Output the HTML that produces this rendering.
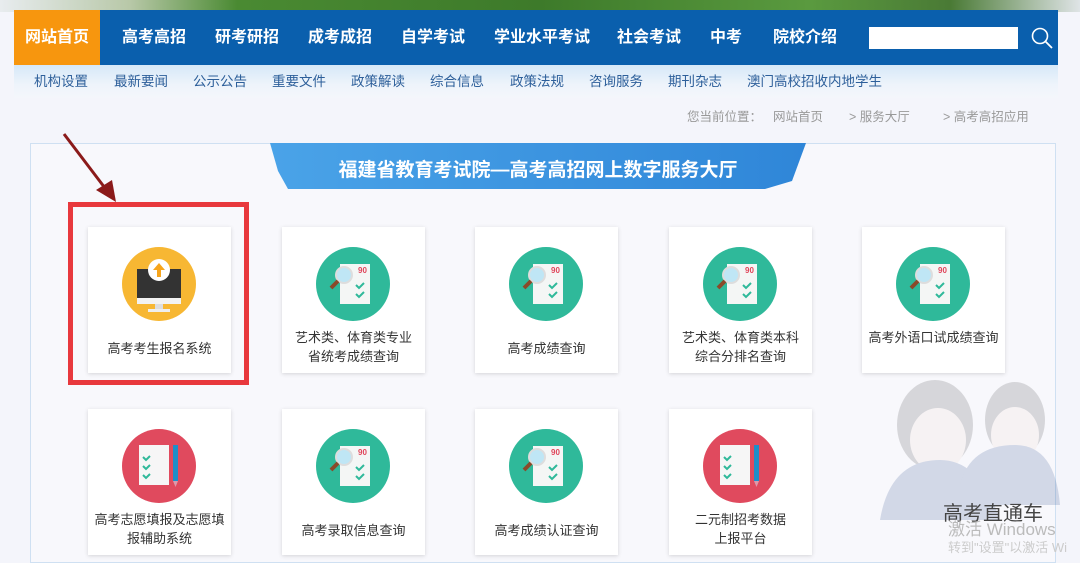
<!DOCTYPE html>
<html><head><meta charset="utf-8">
<style>
*{margin:0;padding:0;box-sizing:border-box}
body{width:1080px;height:549px;overflow:hidden;background:#f4f5fb;font-family:"Liberation Sans","Noto Sans CJK SC",sans-serif;position:relative}
.top{position:absolute;left:0;top:0;width:1080px;height:12px;background:linear-gradient(90deg,#e8ecef 0,#b8c8a8 12%,#4a8a32 22%,#3d7a2a 50%,#5a9a3f 75%,#4a7a35 88%,#dfe4e6 100%)}
.nav{position:absolute;left:14px;top:10px;width:1044px;height:55px;background:#0a5fad}
.nav span{position:absolute;top:0;line-height:55px;color:#fff;font-size:16px;font-weight:bold}
.nav .home{left:0;width:86px;height:55px;background:#f7960e;text-align:center}
.search{position:absolute;left:855px;top:17px;width:149px;height:22px;background:#fff}
.sub{position:absolute;left:14px;top:65px;width:1044px;height:33px;background:linear-gradient(#d6e8f8,#eef4fb 60%,#f4f6fb)}
.sub span{position:absolute;top:0;line-height:33px;font-size:13.5px;color:#2d5f9a}
.crumb{position:absolute;top:106px;font-size:12.5px;color:#999}
.panel{position:absolute;left:30px;top:143px;width:1026px;height:420px;border:1px solid #cfe0f2;background:#f8f8fc}
.card{position:absolute;width:143px;height:146px;background:#fff;box-shadow:0 1px 4px rgba(0,0,0,.15);text-align:center}
.card svg{position:absolute;left:34px;top:20px}
.card .t{position:absolute;left:0;width:143px;font-size:13px;color:#333;line-height:19px}
.red{position:absolute;left:68px;top:202px;width:181px;height:183px;border:5px solid #e8383d}
</style></head><body>
<div class="top"></div>
<div class="nav">
<span class="home">网站首页</span>
<span style="left:108px">高考高招</span>
<span style="left:201px">研考研招</span>
<span style="left:294px">成考成招</span>
<span style="left:387px">自学考试</span>
<span style="left:480px">学业水平考试</span>
<span style="left:603px">社会考试</span>
<span style="left:696px">中考</span>
<span style="left:759px">院校介绍</span>
<div class="search"></div>
<svg style="position:absolute;left:1016px;top:16px" width="24" height="24" viewBox="0 0 24 24"><circle cx="10" cy="10" r="7.5" fill="none" stroke="#fff" stroke-width="1.6"/><path d="M15.5 15.5L22 22" stroke="#fff" stroke-width="1.8"/></svg>
</div>
<div class="sub">
<span style="left:20px">机构设置</span><span style="left:100px">最新要闻</span><span style="left:179px">公示公告</span><span style="left:258px">重要文件</span><span style="left:337px">政策解读</span><span style="left:416px">综合信息</span><span style="left:496px">政策法规</span><span style="left:575px">咨询服务</span><span style="left:654px">期刊杂志</span><span style="left:733px">澳门高校招收内地学生</span>
</div>
<span class="crumb" style="left:687px">您当前位置：</span>
<span class="crumb" style="left:773px">网站首页</span>
<span class="crumb" style="left:849px">&gt; 服务大厅</span>
<span class="crumb" style="left:943px">&gt; 高考高招应用</span>
<div class="panel"></div>
<svg style="position:absolute;left:270px;top:143px" width="536" height="48"><defs><linearGradient id="bg" x1="0" x2="1"><stop offset="0" stop-color="#4aa3e8"/><stop offset="1" stop-color="#2f86d8"/></linearGradient></defs><polygon points="0,0 536,0 522,38 495,46 18,46 8,28" fill="url(#bg)"/><text x="268" y="33" text-anchor="middle" fill="#fff" font-size="19" font-weight="bold" font-family="Liberation Sans,Noto Sans CJK SC,sans-serif">福建省教育考试院—高考高招网上数字服务大厅</text></svg>
<svg style="position:absolute;left:60px;top:130px" width="60" height="75"><path d="M4 4L48 62" stroke="#8b1a1a" stroke-width="3"/><polygon points="56,72 36,60 52,50" fill="#8b1a1a"/></svg>
<div class="red"></div>

<svg width="0" height="0" style="position:absolute"><defs>
<g id="mag"><circle cx="37" cy="37" r="37" fill="#2fb99a"/><rect x="24" y="17" width="30" height="40" fill="#f4f6f5"/><text x="42" y="26" font-size="8" fill="#e0455a" font-weight="bold" font-family="Liberation Sans">90</text><path d="M40 38l3 3 5-5M40 47l3 3 5-5" stroke="#2fb99a" stroke-width="2" fill="none"/><circle cx="28" cy="28" r="8" fill="#bfe6f5" stroke="#ddd" stroke-width="2"/><path d="M22 34l-7 7" stroke="#8a4a2a" stroke-width="4"/></g>
<g id="doc"><circle cx="37" cy="37" r="37" fill="#e04a5e"/><rect x="17" y="16" width="30" height="40" fill="#f6f6f6"/><path d="M21 28l3 3 4-4M21 37l3 3 4-4M21 46l3 3 4-4" stroke="#2fb99a" stroke-width="2" fill="none"/><rect x="51" y="16" width="5" height="36" fill="#1e8ec8"/><polygon points="51,52 56,52 53.5,58" fill="#d9a"/></g>
</defs></svg>

<div class="card" style="left:88px;top:227px"><svg width="75" height="75"><circle cx="37" cy="37" r="37" fill="#f7b733"/><rect x="15" y="22" width="44" height="29" fill="#333"/><rect x="15" y="51" width="44" height="6" fill="#f2f2f2"/><rect x="33" y="57" width="8" height="5" fill="#ddd"/><rect x="26" y="62" width="22" height="3" fill="#eee"/><circle cx="37" cy="23" r="11" fill="#fff"/><path d="M37 16l-6 7h4v7h4v-7h4z" fill="#f7a51c"/></svg><div class="t" style="top:112px">高考考生报名系统</div></div>
<div class="card" style="left:282px;top:227px"><svg width="75" height="75"><use href="#mag"/></svg><div class="t" style="top:101px">艺术类、体育类专业<br>省统考成绩查询</div></div>
<div class="card" style="left:475px;top:227px"><svg width="75" height="75"><use href="#mag"/></svg><div class="t" style="top:112px">高考成绩查询</div></div>
<div class="card" style="left:669px;top:227px"><svg width="75" height="75"><use href="#mag"/></svg><div class="t" style="top:101px">艺术类、体育类本科<br>综合分排名查询</div></div>
<div class="card" style="left:862px;top:227px"><svg width="75" height="75"><use href="#mag"/></svg><div class="t" style="top:101px">高考外语口试成绩查询</div></div>

<div class="card" style="left:88px;top:409px"><svg width="75" height="75"><use href="#doc"/></svg><div class="t" style="top:101px">高考志愿填报及志愿填<br>报辅助系统</div></div>
<div class="card" style="left:282px;top:409px"><svg width="75" height="75"><use href="#mag"/></svg><div class="t" style="top:112px">高考录取信息查询</div></div>
<div class="card" style="left:475px;top:409px"><svg width="75" height="75"><use href="#mag"/></svg><div class="t" style="top:112px">高考成绩认证查询</div></div>
<div class="card" style="left:669px;top:409px"><svg width="75" height="75"><use href="#doc"/></svg><div class="t" style="top:101px">二元制招考数据<br>上报平台</div></div>

<svg style="position:absolute;left:880px;top:365px" width="180" height="184" opacity="0.18"><ellipse cx="55" cy="60" rx="38" ry="45" fill="#444"/><ellipse cx="135" cy="55" rx="30" ry="38" fill="#444"/><ellipse cx="58" cy="75" rx="28" ry="32" fill="#f0d8d0"/><ellipse cx="135" cy="70" rx="24" ry="28" fill="#f0d8d0"/><path d="M0 155q10-60 60-60q40 0 60 60z" fill="#2a4a8a"/><path d="M80 120q10-40 55-40q40 0 45 60h-100z" fill="#2a4a8a"/></svg>
<div style="position:absolute;left:943px;top:497px;font-size:20px;color:#444">高考直通车</div>
<div style="position:absolute;left:948px;top:515px;font-size:17px;color:#bbb">激活 Windows</div>
<div style="position:absolute;left:948px;top:537px;font-size:13px;color:#ccc">转到"设置"以激活 Wi</div>
</body></html>
